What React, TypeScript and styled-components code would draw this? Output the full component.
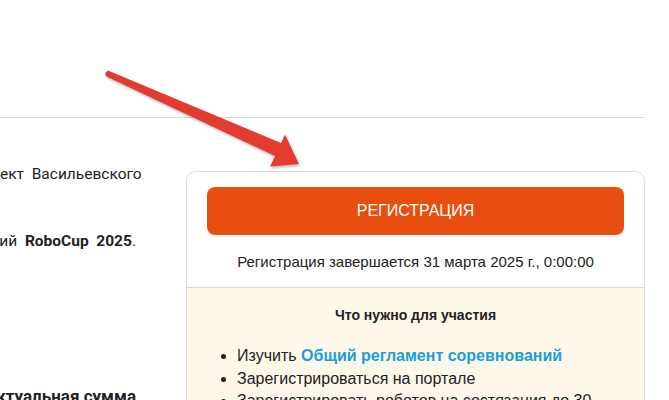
import styled, { createGlobalStyle } from "styled-components";

const GlobalStyle = createGlobalStyle`
  html, body {
    margin: 0;
    padding: 0;
    background: #fff;
    overflow: hidden;
  }
  body {
    font-family: Roboto, "Liberation Sans", Arial, sans-serif;
    color: #222;
  }
`;

const Page = styled.div`
  position: relative;
  width: 669px;
  height: 400px;
  overflow: hidden;
`;

const Header = styled.header`
  height: 117px;
  margin-right: 24px;
  border-bottom: 1px solid #dcdcdc;
`;

const Content = styled.main`
  display: flex;
  align-items: flex-start;
  gap: 50px;
  padding: 45px 24px 0 0;
`;

const Article = styled.section`
  flex: 0 0 520px;
  min-width: 0;
  margin-left: -384px;
  font-size: 15.5px;
  line-height: 22px;
  color: #222;
`;

const Paragraph = styled.p<{ $gap?: number }>`
  margin: 0 0 ${(p) => p.$gap ?? 23}px;
`;

const Line = styled.span<{ $last?: boolean }>`
  display: block;
  text-align: ${(p) => (p.$last ? "left" : "right")};
  white-space: pre;
`;

const Strong = styled.b`
  font-weight: 700;
`;

const Subheading = styled.h3`
  margin: 0;
  font-size: 17px;
  line-height: 24px;
  font-weight: 700;
  text-align: right;
  white-space: nowrap;
`;

const Card = styled.aside`
  flex: 0 0 auto;
  width: 457px;
  margin-top: 8px;
  border: 1px solid #dadada;
  border-radius: 10px;
  overflow: hidden;
  font-family: "Liberation Sans", Arial, sans-serif;
`;

const CardTop = styled.div`
  padding: 15px 20px 0;
  border-bottom: 1px solid #dadada;
`;

const RegisterButton = styled.button`
  display: block;
  width: 100%;
  height: 48px;
  border: none;
  border-radius: 8px;
  background: #e84e0f;
  color: #fff;
  font-family: "Liberation Sans", Arial, sans-serif;
  font-size: 16px;
  cursor: pointer;
`;

const Deadline = styled.div`
  padding: 18px 0 17px;
  text-align: center;
  font-size: 15px;
  line-height: 17px;
  color: #222;
`;

const Requirements = styled.div`
  background: #fef8eb;
  padding: 19px 20px 20px;
`;

const RequirementsTitle = styled.div`
  text-align: center;
  font-size: 14px;
  font-weight: 700;
  line-height: 16px;
  color: #222;
`;

const Steps = styled.ul`
  margin: 22px 0 0;
  padding-left: 30px;
  font-size: 16px;
  line-height: 22.5px;
  color: #222;

  li {
    height: 22.5px;
  }
`;

const Link = styled.a`
  color: #1a9fdc;
  font-weight: 700;
  text-decoration: none;
`;

const ArrowLayer = styled.svg`
  position: absolute;
  left: 0;
  top: 0;
  pointer-events: none;
  filter: drop-shadow(1px 2px 1px rgba(0, 0, 0, 0.25));
`;

const Arrow = () => (
  <ArrowLayer width="669" height="400" viewBox="0 0 669 400">
    <path
      d="M108 70.5 L281 143 L285 134.5 L299 164 L270 166.5 L275 156 L106.5 76.5 Q103.5 72.5 108 70.5 Z"
      fill="#e43b30"
    />
  </ArrowLayer>
);

const App = () => {
  return (
    <Page>
      <GlobalStyle />
      <Header />
      <Content>
        <Article>
          <Paragraph>
            <Line>Место проведения: Санкт-Петербург, Средний проспект  Васильевского</Line>
            <Line $last>острова, 29.</Line>
          </Paragraph>
          <Paragraph $gap={132}>
            <Line>
              Соревнования являются отбором на этап состязаний  <Strong>RoboCup  2025</Strong>.
            </Line>
          </Paragraph>
          <Subheading>Оргвзнос: актуальная сумма</Subheading>
        </Article>
        <Card>
          <CardTop>
            <RegisterButton>РЕГИСТРАЦИЯ</RegisterButton>
            <Deadline>Регистрация завершается 31 марта 2025 г., 0:00:00</Deadline>
          </CardTop>
          <Requirements>
            <RequirementsTitle>Что нужно для участия</RequirementsTitle>
            <Steps>
              <li>
                Изучить <Link href="#">Общий регламент соревнований</Link>
              </li>
              <li>Зарегистрироваться на портале</li>
              <li>Зарегистрировать роботов на состязания до 30 марта</li>
              <li>Оплатить участие</li>
            </Steps>
          </Requirements>
        </Card>
      </Content>
      <Arrow />
    </Page>
  );
};

export default App;
